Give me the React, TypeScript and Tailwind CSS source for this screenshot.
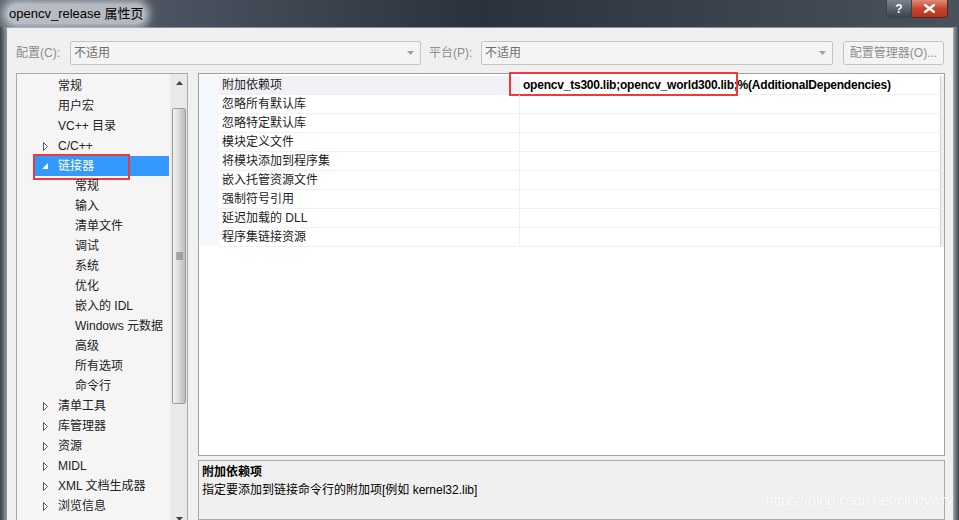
import React from "react";

const ui = { fontFamily: '"Liberation Sans", "Noto Sans CJK SC", sans-serif' };

type TreeItem = { label: string; level: 1 | 2; arrow?: "closed" | "open"; selected?: boolean };

const treeItems: TreeItem[] = [
  { label: "常规", level: 1 },
  { label: "用户宏", level: 1 },
  { label: "VC++ 目录", level: 1 },
  { label: "C/C++", level: 1, arrow: "closed" },
  { label: "链接器", level: 1, arrow: "open", selected: true },
  { label: "常规", level: 2 },
  { label: "输入", level: 2 },
  { label: "清单文件", level: 2 },
  { label: "调试", level: 2 },
  { label: "系统", level: 2 },
  { label: "优化", level: 2 },
  { label: "嵌入的 IDL", level: 2 },
  { label: "Windows 元数据", level: 2 },
  { label: "高级", level: 2 },
  { label: "所有选项", level: 2 },
  { label: "命令行", level: 2 },
  { label: "清单工具", level: 1, arrow: "closed" },
  { label: "库管理器", level: 1, arrow: "closed" },
  { label: "资源", level: 1, arrow: "closed" },
  { label: "MIDL", level: 1, arrow: "closed" },
  { label: "XML 文档生成器", level: 1, arrow: "closed" },
  { label: "浏览信息", level: 1, arrow: "closed" },
];

const props = [
  "附加依赖项",
  "忽略所有默认库",
  "忽略特定默认库",
  "模块定义文件",
  "将模块添加到程序集",
  "嵌入托管资源文件",
  "强制符号引用",
  "延迟加载的 DLL",
  "程序集链接资源",
];

function Combo({ width }: { width: string }) {
  return (
    <div className={`${width} h-[24px] flex items-center justify-between border border-[#c4c4c4] rounded-[2px] bg-[#f4f4f4] pl-[3px] pr-[6px]`}>
      <span className="text-[12px] text-[#6d6d6d]">不适用</span>
      <svg width="7" height="4" viewBox="0 0 7 4">
        <path d="M0 0 H7 L3.5 4 Z" fill="#a0a0a0" />
      </svg>
    </div>
  );
}

function Arrow({ kind, white }: { kind: "closed" | "open"; white?: boolean }) {
  if (kind === "open") {
    return (
      <svg width="6" height="6" viewBox="0 0 6 6">
        <path d="M6 0 V6 H0 Z" fill={white ? "#ffffff" : "#333"} />
      </svg>
    );
  }
  return (
    <svg width="5" height="9" viewBox="0 0 5 9">
      <path d="M0.5 0.5 L4.5 4.5 L0.5 8.5 Z" fill="#fff" stroke="#555" strokeWidth="1" />
    </svg>
  );
}

export default function App() {
  return (
    <div className="w-[959px] h-[520px] overflow-hidden flex flex-col bg-[#1f2732]" style={ui}>
      {/* title bar */}
      <div className="h-[27px] flex items-start bg-gradient-to-r from-[#5c6672] via-[#2a323d] to-[#4a525c] relative">
        <div className="pl-[7px] pt-[4px] flex">
          <span className="text-[13px] text-black bg-[#dfe3e8]/70 rounded-[8px] px-[2px] shadow-[0_0_8px_4px_rgba(225,230,236,0.75)]">
            opencv_release 属性页
          </span>
        </div>
        <div className="ml-auto mr-[11px] flex">
          <div className="w-[26px] h-[18px] flex items-center justify-center rounded-bl-[4px] border border-t-0 border-[#3b424c] bg-gradient-to-b from-[#7b838e] to-[#3c444f] text-white text-[12px] font-bold">
            ?
          </div>
          <div className="w-[36px] h-[18px] flex items-center justify-center rounded-br-[4px] border border-t-0 border-l-0 border-[#5a2420] bg-gradient-to-b from-[#e08a76] via-[#c6452f] to-[#b8321d]">
            <svg width="11" height="9" viewBox="0 0 11 9">
              <path d="M1 1 L10 8 M10 1 L1 8" stroke="#fff" strokeWidth="2.4" strokeLinecap="square" />
            </svg>
          </div>
        </div>
      </div>

      <div className="flex flex-1 min-h-0">
        <div className="w-[6px] bg-gradient-to-r from-[#3a4048] to-[#8a9096]" />
        <div className="flex-1 flex flex-col bg-[#f0f0f0] border-l border-t border-[#8c9097] min-h-0">
          {/* config row */}
          <div className="flex items-center pt-[13px] pl-[9px] pr-[9px] h-[37px]">
            <span className="w-[54px] text-[12px] text-[#8d8d8d]">配置(C):</span>
            <Combo width="w-[351px]" />
            <span className="ml-[8px] w-[52px] text-[12px] text-[#8d8d8d]">平台(P):</span>
            <Combo width="w-[352px]" />
            <div className="ml-[10px] w-[101px] h-[24px] flex items-center justify-center border border-[#c2c2c2] rounded-[3px] bg-[#f4f4f4] text-[12px] text-[#8d8d8d]">
              配置管理器(O)...
            </div>
          </div>

          {/* main */}
          <div className="flex flex-1 min-h-0 pt-[8px] pl-[9px] gap-[10px]">
            {/* tree */}
            <div className="w-[172px] h-[460px] shrink-0 flex border border-[#a9a9a9] bg-[#f5f5f5]">
              <div className="flex-1 pt-[2px] overflow-hidden">
                {treeItems.map((it, i) => (
                  <div key={i} className="h-[20px] flex items-center pl-[16px] pr-[1px] relative">
                    <div className={`flex-1 h-[20px] flex items-center ${it.selected ? "bg-[#3399ff] text-white" : "text-[#222]"}`}>
                      <div className="w-[25px] flex justify-end pr-[10px]">
                        {it.arrow && <Arrow kind={it.arrow} white={it.selected} />}
                      </div>
                      <span className={`text-[12px] whitespace-nowrap ${it.level === 2 ? "pl-[17px]" : ""}`}>{it.label}</span>
                    </div>
                    {it.selected && (
                      <div className="absolute left-[16px] top-[-2px] w-[97px] h-[26px] border-2 border-[#f03a3a]" />
                    )}
                  </div>
                ))}
              </div>
              {/* scrollbar */}
              <div className="w-[17px] flex flex-col items-center bg-[#e9e9e9] border-l border-[#ececec]">
                <div className="h-[17px] flex items-center justify-center">
                  <svg width="7" height="4" viewBox="0 0 7 4">
                    <path d="M0 4 H7 L3.5 0 Z" fill="#444" />
                  </svg>
                </div>
                <div className="mt-[17px] w-[14px] h-[296px] rounded-[2px] border border-[#9a9a9a] bg-gradient-to-r from-[#f2f2f2] via-[#d9d9d9] to-[#bdbdbd] flex items-center justify-center">
                  <svg width="7" height="8" viewBox="0 0 7 8">
                    <path d="M0 1 H7 M0 3 H7 M0 5 H7 M0 7 H7" stroke="#6f6f6f" strokeWidth="1" />
                  </svg>
                </div>
                <div className="mt-auto mb-[8px] h-[10px] flex items-center justify-center">
                  <svg width="7" height="4" viewBox="0 0 7 4">
                    <path d="M0 0 H7 L3.5 4 Z" fill="#444" />
                  </svg>
                </div>
              </div>
            </div>

            {/* right column */}
            <div className="w-[747px] flex flex-col gap-[4px]">
              <div className="h-[383px] border border-[#a0a0a0] bg-white flex flex-col">
                <div className="flex">
                  <div className="w-[20px] h-[171px] bg-[#f4f7fb]" />
                  <div className="flex-1 flex flex-col pt-[2px]">
                    {props.map((p, i) => (
                      <div key={p} className="h-[19px] flex border-b border-[#f0f0f0]">
                        <div className={`w-[300px] flex items-center pl-[3px] text-[12px] text-[#222] ${i === 0 ? "bg-[#f0f2f5]" : ""}`}>
                          {p}
                        </div>
                        <div className="flex-1 flex items-center border-l border-[#f0f0f0] pl-[3px] relative">
                          {i === 0 && (
                            <>
                              <span className="text-[12px] font-bold text-black whitespace-nowrap tracking-[-0.22px]">
                                opencv_ts300.lib;opencv_world300.lib;%(AdditionalDependencies)
                              </span>
                              <div className="absolute left-[-11px] top-[-4px] w-[229px] h-[24px] border-2 border-[#f03a3a]" />
                            </>
                          )}
                        </div>
                        <div className="w-[4px] border-l border-[#d0d0d0] bg-[#f0f0f0]" />
                      </div>
                    ))}
                  </div>
                </div>
              </div>

              {/* description */}
              <div className="flex-1 border border-[#a8a8a8] bg-[#f0f0f0] px-[3px] pt-[2px] relative">
                <div className="text-[12px] font-bold text-black leading-[18px]">附加依赖项</div>
                <div className="text-[12px] text-black leading-[18px]">指定要添加到链接命令行的附加项[例如 kernel32.lib]</div>
                <div className="absolute right-[-9px] top-[28px] text-[15px] text-white tracking-[-0.3px] [text-shadow:0_0_1px_rgba(0,0,0,0.12)]">
                  https://blog.csdn.net/cindywry
                </div>
              </div>
            </div>
          </div>
        </div>
        <div className="w-[6px] bg-gradient-to-r from-[#a3a9b0] to-[#3a424c]" />
      </div>
    </div>
  );
}
